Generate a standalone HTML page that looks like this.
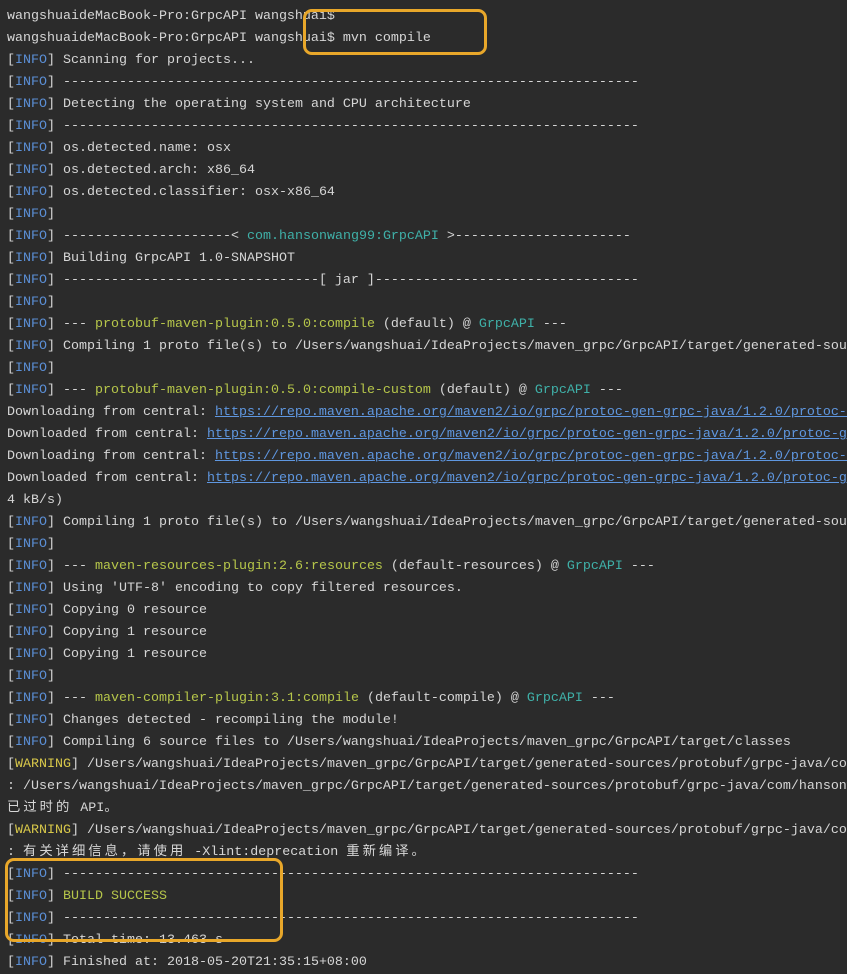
<!DOCTYPE html><html><head><meta charset="utf-8"><style>
body{margin:0;width:847px;height:972px;background:#2b2b2b;overflow:hidden;position:relative}
pre{margin:0;position:absolute;left:7px;top:6px;font-family:"Liberation Mono","Noto Sans CJK SC",monospace;font-size:13.33px;line-height:22px;color:#d6d6d6;white-space:pre}
.i{color:#5b8fd6}.w{color:#d8c84a}.g{color:#b6c64a}.t{color:#3fb0a8}.u{color:#5f97e0;text-decoration:underline}
.c{letter-spacing:3px}
.box{position:absolute;border:3px solid #e8a72a;border-radius:9px}
</style></head><body><pre>wangshuaideMacBook-Pro:GrpcAPI wangshuai$
wangshuaideMacBook-Pro:GrpcAPI wangshuai$ mvn compile
[<span class="i">INFO</span>] Scanning for projects...
[<span class="i">INFO</span>] ------------------------------------------------------------------------
[<span class="i">INFO</span>] Detecting the operating system and CPU architecture
[<span class="i">INFO</span>] ------------------------------------------------------------------------
[<span class="i">INFO</span>] os.detected.name: osx
[<span class="i">INFO</span>] os.detected.arch: x86_64
[<span class="i">INFO</span>] os.detected.classifier: osx-x86_64
[<span class="i">INFO</span>]
[<span class="i">INFO</span>] ---------------------&lt; <span class="t">com.hansonwang99:GrpcAPI</span> &gt;----------------------
[<span class="i">INFO</span>] Building GrpcAPI 1.0-SNAPSHOT
[<span class="i">INFO</span>] --------------------------------[ jar ]---------------------------------
[<span class="i">INFO</span>]
[<span class="i">INFO</span>] --- <span class="g">protobuf-maven-plugin:0.5.0:compile</span> (default) @ <span class="t">GrpcAPI</span> ---
[<span class="i">INFO</span>] Compiling 1 proto file(s) to /Users/wangshuai/IdeaProjects/maven_grpc/GrpcAPI/target/generated-sources
[<span class="i">INFO</span>]
[<span class="i">INFO</span>] --- <span class="g">protobuf-maven-plugin:0.5.0:compile-custom</span> (default) @ <span class="t">GrpcAPI</span> ---
Downloading from central: <span class="u">https://repo.maven.apache.org/maven2/io/grpc/protoc-gen-grpc-java/1.2.0/protoc-gen</span>
Downloaded from central: <span class="u">https://repo.maven.apache.org/maven2/io/grpc/protoc-gen-grpc-java/1.2.0/protoc-gen</span>
Downloading from central: <span class="u">https://repo.maven.apache.org/maven2/io/grpc/protoc-gen-grpc-java/1.2.0/protoc-gen</span>
Downloaded from central: <span class="u">https://repo.maven.apache.org/maven2/io/grpc/protoc-gen-grpc-java/1.2.0/protoc-gen</span>
4 kB/s)
[<span class="i">INFO</span>] Compiling 1 proto file(s) to /Users/wangshuai/IdeaProjects/maven_grpc/GrpcAPI/target/generated-sources
[<span class="i">INFO</span>]
[<span class="i">INFO</span>] --- <span class="g">maven-resources-plugin:2.6:resources</span> (default-resources) @ <span class="t">GrpcAPI</span> ---
[<span class="i">INFO</span>] Using 'UTF-8' encoding to copy filtered resources.
[<span class="i">INFO</span>] Copying 0 resource
[<span class="i">INFO</span>] Copying 1 resource
[<span class="i">INFO</span>] Copying 1 resource
[<span class="i">INFO</span>]
[<span class="i">INFO</span>] --- <span class="g">maven-compiler-plugin:3.1:compile</span> (default-compile) @ <span class="t">GrpcAPI</span> ---
[<span class="i">INFO</span>] Changes detected - recompiling the module!
[<span class="i">INFO</span>] Compiling 6 source files to /Users/wangshuai/IdeaProjects/maven_grpc/GrpcAPI/target/classes
[<span class="w">WARNING</span>] /Users/wangshuai/IdeaProjects/maven_grpc/GrpcAPI/target/generated-sources/protobuf/grpc-java/com/
: /Users/wangshuai/IdeaProjects/maven_grpc/GrpcAPI/target/generated-sources/protobuf/grpc-java/com/hansonwang
<span class="c">已过时的</span> API<span class="c">。</span>
[<span class="w">WARNING</span>] /Users/wangshuai/IdeaProjects/maven_grpc/GrpcAPI/target/generated-sources/protobuf/grpc-java/com/
: <span class="c">有关详细信息，请使用</span> -Xlint:deprecation <span class="c">重新编译。</span>
[<span class="i">INFO</span>] ------------------------------------------------------------------------
[<span class="i">INFO</span>] <span class="g">BUILD SUCCESS</span>
[<span class="i">INFO</span>] ------------------------------------------------------------------------
[<span class="i">INFO</span>] Total time: 13.463 s
[<span class="i">INFO</span>] Finished at: 2018-05-20T21:35:15+08:00</pre>
<div class="box" style="left:303px;top:9px;width:178px;height:40px"></div>
<div class="box" style="left:5px;top:858px;width:272px;height:78px"></div>
</body></html>
